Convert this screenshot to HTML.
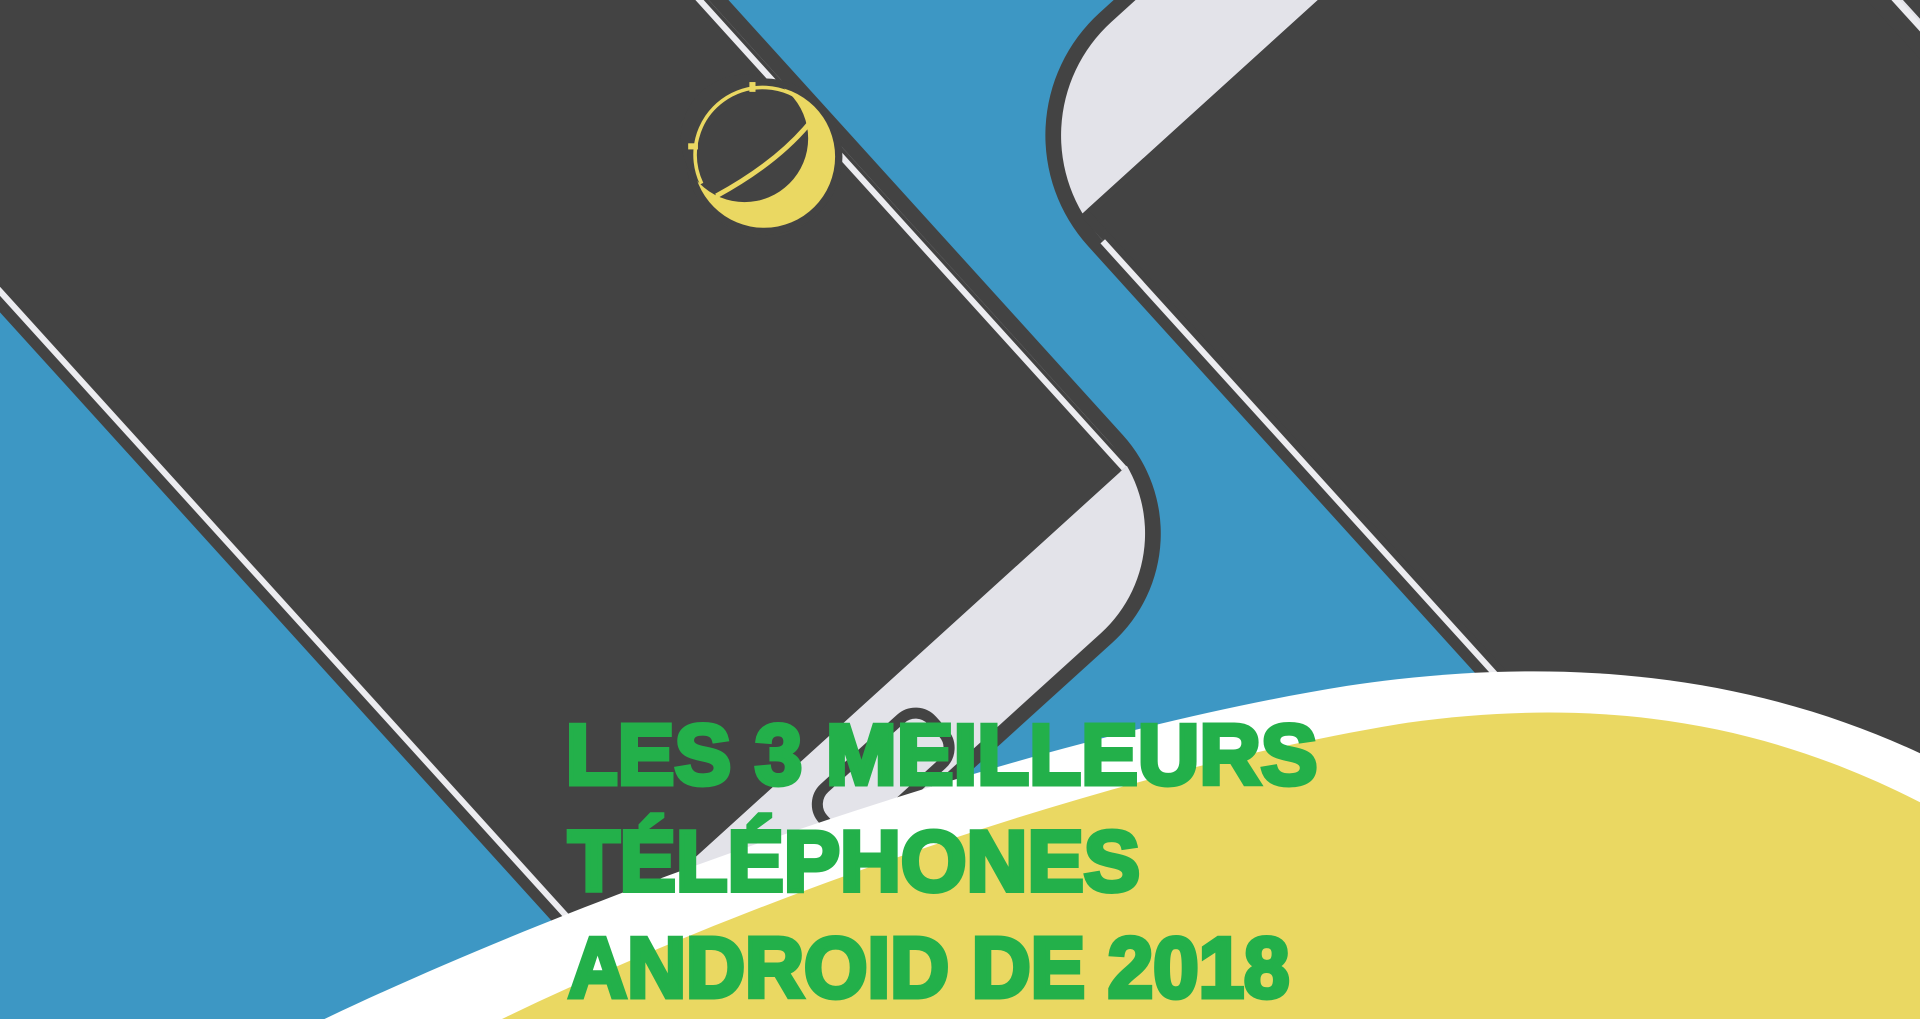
<!DOCTYPE html>
<html><head><meta charset="utf-8"><style>
html,body{margin:0;padding:0;width:1920px;height:1019px;overflow:hidden;background:#3d97c4}
svg{display:block;position:absolute;left:0;top:0}
</style></head><body>
<svg width="1920" height="1019" viewBox="0 0 1568 832" preserveAspectRatio="none">
<rect width="1568" height="832" fill="#3d97c4"/>
<!-- right phone -->
<g transform="translate(1060,390) rotate(47.8)">
  <rect x="-390" y="-640" width="1500" height="640" rx="135" fill="#434343"/>
  <rect x="-378" y="-628" width="1480" height="616" rx="125" fill="#e3e3e9"/>
  <rect x="-278" y="-622" width="1380" height="610" fill="#434343"/>
  <rect x="-250" y="-14" width="1300" height="5" fill="#ececf0"/>
  <rect x="-250" y="-626" width="1300" height="5" fill="#ececf0"/>
  <rect x="-278" y="-606" width="1380" height="586" fill="#434343"/>
</g>
<!-- left phone -->
<g transform="translate(0,255) rotate(47.8)">
  <rect x="-1000" y="-612" width="1810" height="612" rx="120" fill="#434343"/>
  <rect x="-1000" y="-600" width="1798" height="588" rx="110" fill="#e3e3e9"/>
  <rect x="-1000" y="-600" width="1711" height="588" fill="#434343"/>
  <rect x="-1000" y="-14" width="1711" height="5" fill="#ececf0"/>
  <rect x="-1000" y="-597" width="1711" height="5" fill="#ececf0"/>
  <rect x="-1000" y="-590" width="1711" height="574" fill="#434343"/>
  <rect x="740" y="-340" width="50" height="120" rx="18" fill="none" stroke="#434343" stroke-width="9"/>
</g>
<!-- camera -->
<circle cx="624" cy="128" r="64" fill="#434343"/>
<circle cx="624" cy="128" r="58" fill="#ead862"/>
<circle cx="608" cy="113" r="52" fill="#434343"/>
<path d="M585 160 Q640 130 667 93" fill="none" stroke="#ead862" stroke-width="4"/>
<path d="M573 150 A55 55 0 0 1 660 86" fill="none" stroke="#ead862" stroke-width="3"/>
<rect x="612" y="67" width="5" height="8" fill="#ead862"/>
<rect x="562" y="117" width="8" height="5" fill="#ead862"/>
<!-- wave -->
<path d="M265 832 C500 720 850 600 1100 560 C1300 530 1450 560 1568 615 L1568 832 Z" fill="#ffffff"/>
<path d="M410 832 C600 740 900 630 1150 590 C1330 565 1460 600 1568 655 L1568 832 Z" fill="#ead862"/>
<!-- text -->
<g fill="#23b04a" stroke="#23b04a" stroke-width="4" stroke-linejoin="miter" font-family="'Liberation Sans Narrow','Liberation Sans',sans-serif" font-weight="bold" font-size="70">
  <text x="462" y="640" textLength="614" lengthAdjust="spacingAndGlyphs">LES 3 MEILLEURS</text>
  <text x="464" y="727" textLength="467" lengthAdjust="spacingAndGlyphs">TÉLÉPHONES</text>
  <text x="464" y="814" textLength="589" lengthAdjust="spacingAndGlyphs">ANDROID DE 2018</text>
</g>
</svg>
</body></html>
